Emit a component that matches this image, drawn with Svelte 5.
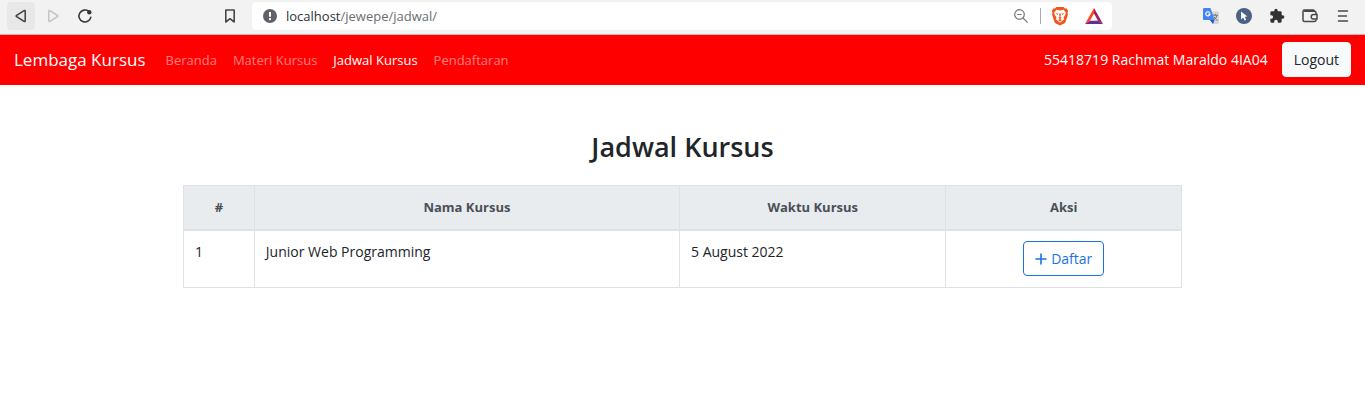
<script>
  const links = [
    { label: 'Beranda' },
    { label: 'Materi Kursus' },
    { label: 'Jadwal Kursus', active: true },
    { label: 'Pendaftaran' }
  ];
  const rows = [{ no: 1, name: 'Junior Web Programming', date: '5 August 2022' }];
  let address = $state('/jewepe/jadwal/');
</script>

<div class="browser">
  <div class="nav-tools">
    <button class="tool back" aria-label="Back">
      <svg width="18" height="18" viewBox="0 0 18 18"><path d="M13.2 4.2v9.6c0 .8-.5 1-1.1.6L4.6 9.7c-.6-.4-.6-1 0-1.4l7.5-4.7c.6-.4 1.1-.2 1.1.6z" fill="none" stroke="#3c3f45" stroke-width="1.5" stroke-linejoin="round" /></svg>
    </button>
    <button class="tool" aria-label="Forward">
      <svg width="18" height="18" viewBox="0 0 18 18"><path d="M4.8 4.2v9.6c0 .8.5 1 1.1.6l7.5-4.7c.6-.4.6-1 0-1.4L5.9 3.6c-.6-.4-1.1-.2-1.1.6z" fill="none" stroke="#c0c1c4" stroke-width="1.4" stroke-linejoin="round" /></svg>
    </button>
    <button class="tool" aria-label="Reload">
      <svg width="18" height="18" viewBox="0 0 18 18"><path d="M14.8 10.4A6 6 0 1 1 12.6 4.2" fill="none" stroke="#35383d" stroke-width="1.6" stroke-linecap="round" /><circle cx="13.3" cy="5.2" r="2.2" fill="#35383d" /></svg>
    </button>
    <button class="tool bookmark" aria-label="Bookmark">
      <svg width="18" height="18" viewBox="0 0 18 18"><path d="M4.8 3h8.4v12L9 11.7 4.8 15z" fill="none" stroke="#45484d" stroke-width="1.6" stroke-linejoin="round" /></svg>
    </button>
  </div>

  <div class="address">
    <svg width="14" height="14" viewBox="0 0 14 14" aria-hidden="true"><circle cx="7" cy="7" r="7" fill="#5f6368" /><path d="M7 3v4.8" stroke="#fff" stroke-width="2" /><rect x="6" y="9.1" width="2" height="2" fill="#fff" /></svg>
    <label class="host" for="url">localhost</label>
    <input id="url" type="text" bind:value={address} />
    <button class="tool" aria-label="Zoom">
      <svg width="16" height="16" viewBox="0 0 16 16" fill="none" stroke="#74777c" stroke-width="1.2"><circle cx="6.5" cy="6.5" r="4.8" /><path d="M4.3 6.5h4.4M10 10l4.6 4.6" /></svg>
    </button>
    <span class="divider"></span>
    <button class="tool shield" aria-label="Shields">
      <svg width="18" height="20" viewBox="0 0 18 20"><path d="M5.4 1h7.2l1.4 1.5 1.9.1 1.2 2.7-.6 1.8.5 1.5-2.5 7.3c-.3.8-.8 1.2-1.4 1.6L9 19.6l-4.1-2.1c-.6-.4-1.1-.8-1.4-1.6L1 8.600l.5-1.500-.6-1.800 1.200-2.700L4 2.500z" fill="#f1561f" /><path d="M5.500 3.800 9 4.400l3.500-.6 2.400 2.800-.7 2.400-1.700 2.400.6 1.800L9 16.700l-4.100-3.500.6-1.800L3.800 9l-.7-2.400z" fill="#fff" /><path d="m4.600 7 2.800.8-1 1.200zm8.800 0-2.800.8 1 1.200zM8.100 7.500h1.800l-.4 3.400 1.300 1L9 13l-1.800-1.100 1.300-1zM7 14l2-1 2 1-2 1.400z" fill="#f1561f" /></svg>
    </button>
    <button class="tool" aria-label="Rewards">
      <svg width="18" height="16" viewBox="0 0 18 16"><path d="M9 0 0 16l5-3.2L9 5.6z" fill="#ff4724" /><path d="m9 0 9 16-5-3.2L9 5.6z" fill="#9e1f63" /><path d="M0 16h18l-5-3.2H5z" fill="#662d91" /></svg>
    </button>
  </div>

  <div class="extensions">
    <button class="tool" aria-label="Translate">
      <svg width="18" height="18" viewBox="0 0 18 18"><path d="M7 4.5h9a1 1 0 0 1 1 1V16a1 1 0 0 1-1 1h-5z" fill="#d3d5d8" /><path d="M2 1h6.5l4 12H2a1 1 0 0 1-1-1V2a1 1 0 0 1 1-1z" fill="#4284f3" /><path d="M7.8 13h4.7L11 17z" fill="#2457bd" /><path d="M7.7 5.7A2.1 2.1 0 1 0 8 7.2H6.2" fill="none" stroke="#fff" stroke-width="1.2" /><path d="M11 8.2h5M13.5 7v1.2m1.3.2c-.3 2.2-1.4 3.6-3 4.6m.4-3.2c.8 1.8 1.8 2.8 3.3 3.6" fill="none" stroke="#667480" /></svg>
    </button>
    <button class="tool" aria-label="Pointer extension">
      <svg width="18" height="18" viewBox="0 0 18 18"><circle cx="9" cy="9" r="8" fill="#4b6280" /><path d="m6 4.4 6.4 5-2.7.4 1.5 2.9-1.5.8-1.5-3L6.2 12.4z" fill="#fff" /></svg>
    </button>
    <button class="tool" aria-label="Extensions">
      <svg width="16" height="16" viewBox="0 0 24 24"><path d="M20.5 11H19V7a2 2 0 0 0-2-2h-4V3.5a2.5 2.5 0 0 0-5 0V5H4a2 2 0 0 0-2 2v3.8h1.5a2.7 2.7 0 0 1 0 5.4H2V20a2 2 0 0 0 2 2h3.8v-1.5a2.7 2.7 0 0 1 5.4 0V22H17a2 2 0 0 0 2-2v-4h1.5a2.5 2.5 0 0 0 0-5z" fill="#303236" /></svg>
    </button>
    <button class="tool" aria-label="Wallet">
      <svg width="18" height="18" viewBox="0 0 18 18" fill="none" stroke="#45484d" stroke-width="1.5"><path d="M15 7V5.800a1.500 1.500 0 0 0-1.500-1.500H3.200M13.500 4.300A1.300 1.300 0 0 0 12.200 3H3.500A1.500 1.500 0 0 0 2 4.500V13a1.500 1.500 0 0 0 1.500 1.500h10A1.500 1.500 0 0 0 15 13v-.5" /><path d="M16 7.500h-3.500a2.300 2.300 0 0 0 0 4.600H16z" /></svg>
    </button>
    <button class="tool" aria-label="Menu">
      <svg width="18" height="18" viewBox="0 0 18 18"><path d="M4.5 4h9M4.5 9h8M4.5 14h9" stroke="#45484d" stroke-width="1.6" stroke-linecap="round" /></svg>
    </button>
  </div>
</div>

<nav class="navbar">
  <a class="brand" href="#home">Lembaga Kursus</a>
  <div class="links">
    {#each links as link}
      <a class:active={link.active} href="#{link.label}">{link.label}</a>
    {/each}
  </div>
  <span class="user">55418719 Rachmat Maraldo 4IA04</span>
  <button class="logout">Logout</button>
</nav>

<main>
  <h1>Jadwal Kursus</h1>
  <table>
    <colgroup>
      <col class="no" />
      <col class="name" />
      <col class="date" />
      <col />
    </colgroup>
    <thead>
      <tr>
        <th>#</th>
        <th>Nama Kursus</th>
        <th>Waktu Kursus</th>
        <th>Aksi</th>
      </tr>
    </thead>
    <tbody>
      {#each rows as row}
        <tr>
          <td>{row.no}</td>
          <td>{row.name}</td>
          <td>{row.date}</td>
          <td class="action">
            <button class="register">
              <svg width="12" height="12" viewBox="0 0 12 12" aria-hidden="true"><path d="M6 1v10M1 6h10" stroke="currentColor" stroke-width="1.6" stroke-linecap="round" /></svg>
              Daftar
            </button>
          </td>
        </tr>
      {/each}
    </tbody>
  </table>
</main>

<style>
  :global(body) {
    margin: 0;
    background: #fff;
    color: #212529;
    font-family: "Open Sans", "Noto Sans", sans-serif;
    font-size: 14px;
    line-height: 22px;
  }
  button,
  input {
    font: inherit;
  }
  svg {
    display: block;
    flex: none;
  }
  .browser {
    display: flex;
    align-items: center;
    height: 35px;
    padding-bottom: 3px;
    box-sizing: border-box;
    background: #f2f2f2;
    border-bottom: 1px solid #d9b4b4;
    font-size: 13px;
  }
  .tool {
    display: flex;
    align-items: center;
    justify-content: center;
    width: 28px;
    height: 28px;
    padding: 0;
    border: 0;
    border-radius: 4px;
    background: none;
  }
  .nav-tools {
    display: flex;
    gap: 4px;
    width: 252px;
    padding: 0 8px 0 7px;
    box-sizing: border-box;
  }
  .back {
    background: #e8e8e8;
  }
  .bookmark {
    margin-left: auto;
  }
  .address {
    display: flex;
    flex: 1;
    align-items: center;
    height: 28px;
    padding: 0 4px 0 11px;
    border-radius: 4px;
    background: #fff;
  }
  .host {
    margin-left: 9px;
    color: #303236;
  }
  .address input {
    flex: 1;
    min-width: 0;
    padding: 0;
    border: 0;
    outline: 0;
    background: none;
    color: #6b6e73;
  }
  .divider {
    width: 1px;
    height: 16px;
    margin: 0 5px;
    background: #aaa;
  }
  .shield {
    margin-right: 6px;
  }
  .extensions {
    display: flex;
    gap: 5px;
    justify-content: flex-end;
    width: 253px;
    padding-right: 8px;
    box-sizing: border-box;
  }
  .navbar {
    display: flex;
    align-items: center;
    padding: 7px 14px 8px;
    background: #f00;
  }
  .navbar a {
    color: rgba(255, 255, 255, 0.5);
    text-decoration: none;
  }
  .navbar .brand {
    margin-right: 20px;
    color: #fff;
    font-size: 17px;
  }
  .links {
    display: flex;
    flex: 1;
    gap: 16px;
    font-size: 13px;
  }
  .navbar .active,
  .user {
    color: #fff;
  }
  .logout {
    margin-left: 14px;
    padding: 6px 11px;
    border: 1px solid #f8f9fa;
    border-radius: 4px;
    background: #f8f9fa;
    color: #212529;
    line-height: 21px;
  }
  main {
    max-width: 999px;
    margin: 0 auto;
    padding: 43px 14px;
  }
  h1 {
    margin: 0 0 20px;
    font-size: 27px;
    font-weight: 600;
    line-height: 37px;
    text-align: center;
  }
  table {
    width: 100%;
    border-collapse: collapse;
    table-layout: fixed;
  }
  th,
  td {
    padding: 10px 11px 11px;
    border: 1px solid #dee2e6;
    text-align: left;
    vertical-align: top;
  }
  th {
    border-bottom-width: 2px;
    background: #e9ecef;
    color: #495057;
    font-size: 13px;
    font-weight: 700;
    text-align: center;
  }
  .no {
    width: 7.1%;
  }
  .name {
    width: 42.6%;
  }
  .date {
    width: 26.7%;
  }
  .action {
    text-align: center;
  }
  .register {
    display: inline-flex;
    align-items: center;
    gap: 4px;
    padding: 6px 11px;
    border: 1px solid #1a73e0;
    border-radius: 4px;
    background: #fff;
    color: #1a73e0;
    line-height: 21px;
    vertical-align: top;
  }
</style>
